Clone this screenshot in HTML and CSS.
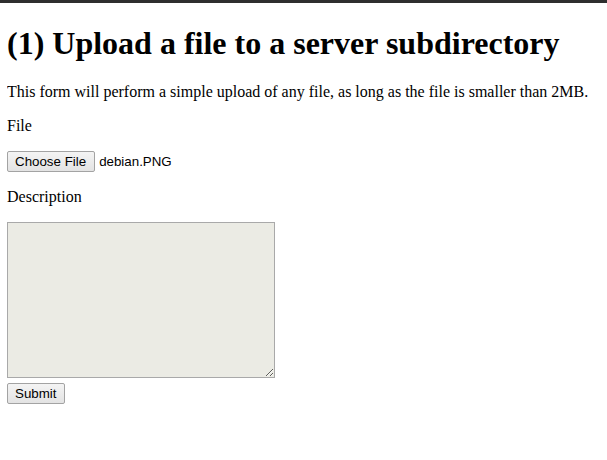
FILE: index.html
```html
<!DOCTYPE html>
<html>
<head>
<meta charset="utf-8">
<title>Upload</title>
<link rel="stylesheet" href="styles.css">
</head>
<body>
<h1 class="title">(1) Upload a file to a server subdirectory</h1>
<p class="intro">This form will perform a simple upload of any file, as long as the file is smaller than 2MB.</p>
<form class="upload" action="#" onsubmit="return false">
  <p class="label">File</p>
  <p class="file-row"><button type="button" class="btn">Choose File</button><span class="file-name">debian.PNG</span></p>
  <p class="label">Description</p>
  <div class="desc-block"><textarea class="desc"></textarea><br><button type="submit" class="btn">Submit</button></div>
</form>
</body>
</html>
```
FILE: styles.css
```css
html {
  border-top: 3px solid #2e2e2e;
}
body {
  margin: 8px 7px;
  font-family: "Liberation Serif", "Times New Roman", serif;
  font-size: 16px;
  color: #000;
  background: #fff;
}
.title {
  font-size: 32px;
  font-weight: bold;
  margin: 14px 0 21px;
}
.intro, .label {
  margin: 16px 0;
}
.file-row {
  margin: 16px 0;
  display: flex;
  align-items: center;
  gap: 4px;
  font-family: "Liberation Sans", Arial, sans-serif;
  font-size: 13.33px;
}
.btn {
  font-family: "Liberation Sans", Arial, sans-serif;
  font-size: 13.33px;
  color: #000;
  padding: 1px 8px 1px 7px;
  border: 1px solid #a3a3a3;
  border-radius: 2px;
  background: linear-gradient(#f4f4f4, #e3e3e3);
  margin: 0;
  height: 21px;
}
.desc {
  box-sizing: border-box;
  width: 268px;
  height: 156px;
  background: #ebebe4;
  border: 1px solid #a9a9a9;
  margin: 0;
  vertical-align: bottom;
}
.desc-block {
  line-height: 1;
}
.desc-block .btn {
  margin-top: 5px;
}
```
